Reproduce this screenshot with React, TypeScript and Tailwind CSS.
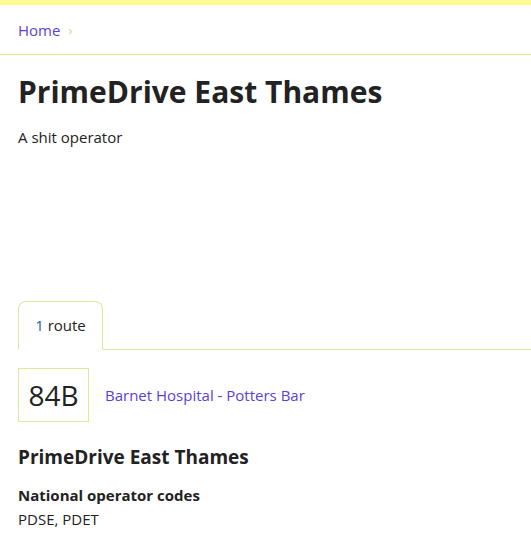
import React from "react";

const App: React.FC = () => {
    return (
        <div className="min-h-screen bg-white text-[#222] font-['Open_Sans',sans-serif]">
            <div className="h-[5px] bg-[#fffd92]" />
            <nav className="border-b border-[#dcec80] px-[18px] h-[50px] flex items-center text-[15px]">
                <a href="#" className="text-[#5b3fd6] mt-[2px]">
                    Home
                </a>
                <span className="ml-2 mt-[2px] text-[#c8d48a] text-[13px]">›</span>
            </nav>
            <main className="px-[18px]">
                <h1 className="mt-[16px] text-[30px] font-bold leading-[42px]">
                    PrimeDrive East Thames
                </h1>
                <p className="mt-[13px] text-[15px] leading-[22px]">A shit operator</p>

                <div className="mt-[153px] -mr-[18px] flex border-b border-[#dfe99a]">
                    <div className="-mb-px w-[85px] h-[49px] flex items-center justify-center border border-b-white border-[#dfe99a] rounded-t-[8px] bg-white text-[15px]">
                        <span>
                            <span className="text-[#1a5f9a]">1</span> route
                        </span>
                    </div>
                </div>

                <div className="mt-[18px] flex items-center">
                    <div className="w-[71px] h-[54px] border border-[#dfe99a] flex items-center justify-center text-[28px] font-normal leading-none">
                        84B
                    </div>
                    <a href="#" className="ml-[16px] text-[15px] text-[#5b3fd6]">
                        Barnet Hospital - Potters Bar
                    </a>
                </div>

                <h2 className="mt-[22px] text-[19px] font-bold leading-[26px]">
                    PrimeDrive East Thames
                </h2>
                <h3 className="mt-[14px] text-[15px] font-bold leading-[22px]">
                    National operator codes
                </h3>
                <p className="mt-[2px] text-[15px] leading-[22px]">PDSE, PDET</p>
            </main>
        </div>
    );
};

export default App;
